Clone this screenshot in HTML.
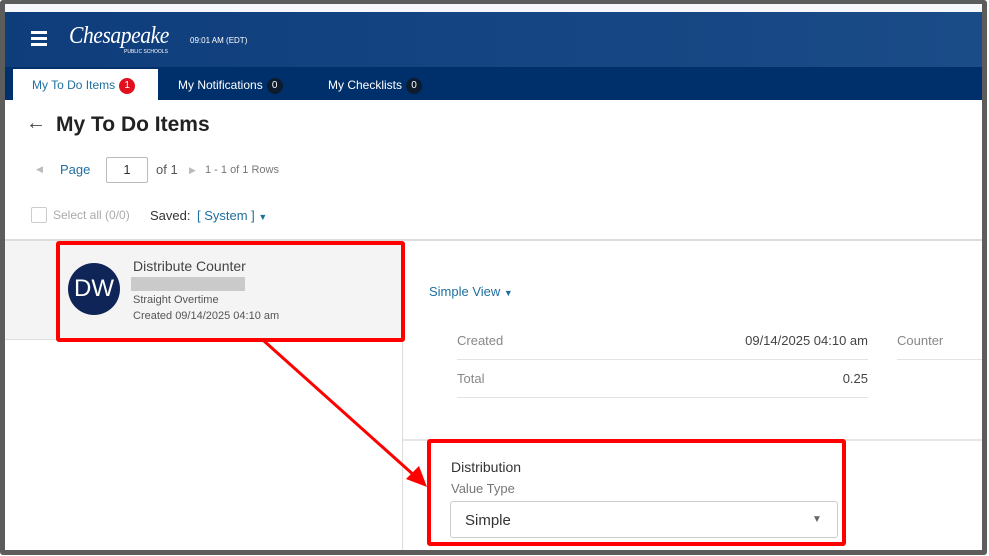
<!DOCTYPE html>
<html><head><meta charset="utf-8"><style>
*{margin:0;padding:0;box-sizing:border-box}
body{width:989px;height:556px;background:#fff;position:relative;overflow:hidden;font-family:"Liberation Sans",sans-serif;color:#333}
.a{position:absolute;white-space:nowrap}
.frame{position:absolute;left:0;top:0;width:987px;height:555px;border:5px solid #5c5c5c;border-top-width:4px;border-radius:3px;z-index:10;pointer-events:none}
.red{position:absolute;border:4px solid #f00;border-radius:3px;z-index:5}
.badge{display:inline-block;width:16px;height:16px;border-radius:8px;background:#0d1b2e;color:#fff;font-size:10px;text-align:center;line-height:16px;vertical-align:1px;margin-left:4px}
</style></head><body>
<div class="a" style="left:5px;top:4px;width:977px;height:8px;background:#f6f7fb"></div>
<div class="a" style="left:5px;top:12px;width:977px;height:55px;background:linear-gradient(90deg,#0f3d7c,#1a4c88)"></div>
<div class="a" style="left:5px;top:67px;width:977px;height:33px;background:#00306b"></div>
<div class="a" style="left:31px;top:31px;width:16px;height:3px;background:#fff;box-shadow:0 6px 0 #fff,0 12px 0 #fff"></div>
<div class="a" style="left:69px;top:23px;color:#fff;font-family:'Liberation Serif',serif;font-style:italic;font-size:24px;letter-spacing:-0.5px;transform:scaleX(0.9);transform-origin:left">Chesapeake</div>
<div class="a" style="left:124px;top:49px;color:#fff;font-size:5px">PUBLIC SCHOOLS</div>
<div class="a" style="left:190px;top:36px;color:#fff;font-size:8px">09:01 AM (EDT)</div>
<div class="a" style="left:13px;top:69px;width:145px;height:31px;background:#fff"></div>
<div class="a" style="left:32px;top:78px;font-size:12px;color:#1f6f9f">My To Do Items<span class="badge" style="background:#e0101e">1</span></div>
<div class="a" style="left:178px;top:78px;font-size:12px;color:#fff">My Notifications<span class="badge">0</span></div>
<div class="a" style="left:328px;top:78px;font-size:12px;color:#fff">My Checklists<span class="badge">0</span></div>
<div class="a" style="left:26px;top:112px;font-size:20px;color:#444">&#8592;</div>
<div class="a" style="left:56px;top:113px;font-size:21px;font-weight:bold;color:#222">My To Do Items</div>
<div class="a" style="left:36px;top:164px;font-size:9px;color:#bbb">&#9664;</div>
<div class="a" style="left:60px;top:162px;font-size:13px;color:#1f6f9f">Page</div>
<div class="a" style="left:106px;top:157px;width:42px;height:26px;border:1px solid #bbb;border-radius:2px;font-size:13px;text-align:center;line-height:24px">1</div>
<div class="a" style="left:156px;top:162px;font-size:13px;color:#555">of 1</div>
<div class="a" style="left:189px;top:165px;font-size:9px;color:#bbb">&#9654;</div>
<div class="a" style="left:205px;top:164px;font-size:11px;color:#777">1 - 1 of 1 Rows</div>
<div class="a" style="left:31px;top:207px;width:16px;height:16px;border:1px solid #ccc;border-radius:2px"></div>
<div class="a" style="left:53px;top:208px;font-size:12px;color:#aaa">Select all (0/0)</div>
<div class="a" style="left:150px;top:208px;font-size:13px;color:#333">Saved:</div>
<div class="a" style="left:197px;top:208px;font-size:13px;color:#1f6f9f">[ System ] <span style="font-size:9px">&#9660;</span></div>
<div class="a" style="left:5px;top:239px;width:977px;height:2px;background:#ddd"></div>
<div class="a" style="left:5px;top:241px;width:398px;height:99px;background:#f4f4f4;border-bottom:1px solid #ddd"></div>
<div class="a" style="left:402px;top:241px;width:1px;height:310px;background:#ddd"></div>
<div class="a" style="left:68px;top:263px;width:52px;height:52px;border-radius:26px;background:#0f2557;color:#fff;font-size:24px;text-align:center;line-height:52px">DW</div>
<div class="a" style="left:133px;top:258px;font-size:14px;color:#444">Distribute Counter</div>
<div class="a" style="left:131px;top:277px;width:114px;height:14px;background:#cacaca"></div>
<div class="a" style="left:133px;top:294px;font-size:11px;color:#555">Straight Overtime</div>
<div class="a" style="left:133px;top:310px;font-size:11px;color:#555">Created 09/14/2025 04:10 am</div>
<div class="red" style="left:56px;top:241px;width:349px;height:101px"></div>
<div class="a" style="left:429px;top:284px;font-size:13px;color:#1f6f9f">Simple View <span style="font-size:9px">&#9660;</span></div>
<div class="a" style="left:457px;top:333px;font-size:13px;color:#888">Created</div>
<div class="a" style="left:700px;top:333px;width:168px;text-align:right;font-size:13px;color:#444">09/14/2025 04:10 am</div>
<div class="a" style="left:897px;top:333px;font-size:13px;color:#888">Counter</div>
<div class="a" style="left:457px;top:359px;width:411px;height:1px;background:#e3e3e3"></div>
<div class="a" style="left:897px;top:359px;width:85px;height:1px;background:#e3e3e3"></div>
<div class="a" style="left:457px;top:371px;font-size:13px;color:#888">Total</div>
<div class="a" style="left:800px;top:371px;width:68px;text-align:right;font-size:13px;color:#444">0.25</div>
<div class="a" style="left:457px;top:397px;width:411px;height:1px;background:#e3e3e3"></div>
<div class="a" style="left:403px;top:439px;width:579px;height:2px;background:#e6e6e6"></div>
<div class="a" style="left:451px;top:459px;font-size:14px;color:#333">Distribution</div>
<div class="a" style="left:451px;top:481px;font-size:13px;color:#777">Value Type</div>
<div class="a" style="left:450px;top:501px;width:388px;height:37px;border:1px solid #ccc;border-radius:3px;background:#fff"></div>
<div class="a" style="left:465px;top:512px;font-size:15px;color:#333">Simple</div>
<div class="a" style="left:812px;top:514px;font-size:10px;color:#666">&#9660;</div>
<div class="red" style="left:427px;top:439px;width:419px;height:107px"></div>
<svg class="a" style="left:0;top:0;z-index:6" width="989" height="556"><line x1="264" y1="341" x2="416" y2="477" stroke="#f00" stroke-width="3"/><polygon points="427,487 406,479 419,466" fill="#f00"/></svg>
<div class="frame"></div>
</body></html>
